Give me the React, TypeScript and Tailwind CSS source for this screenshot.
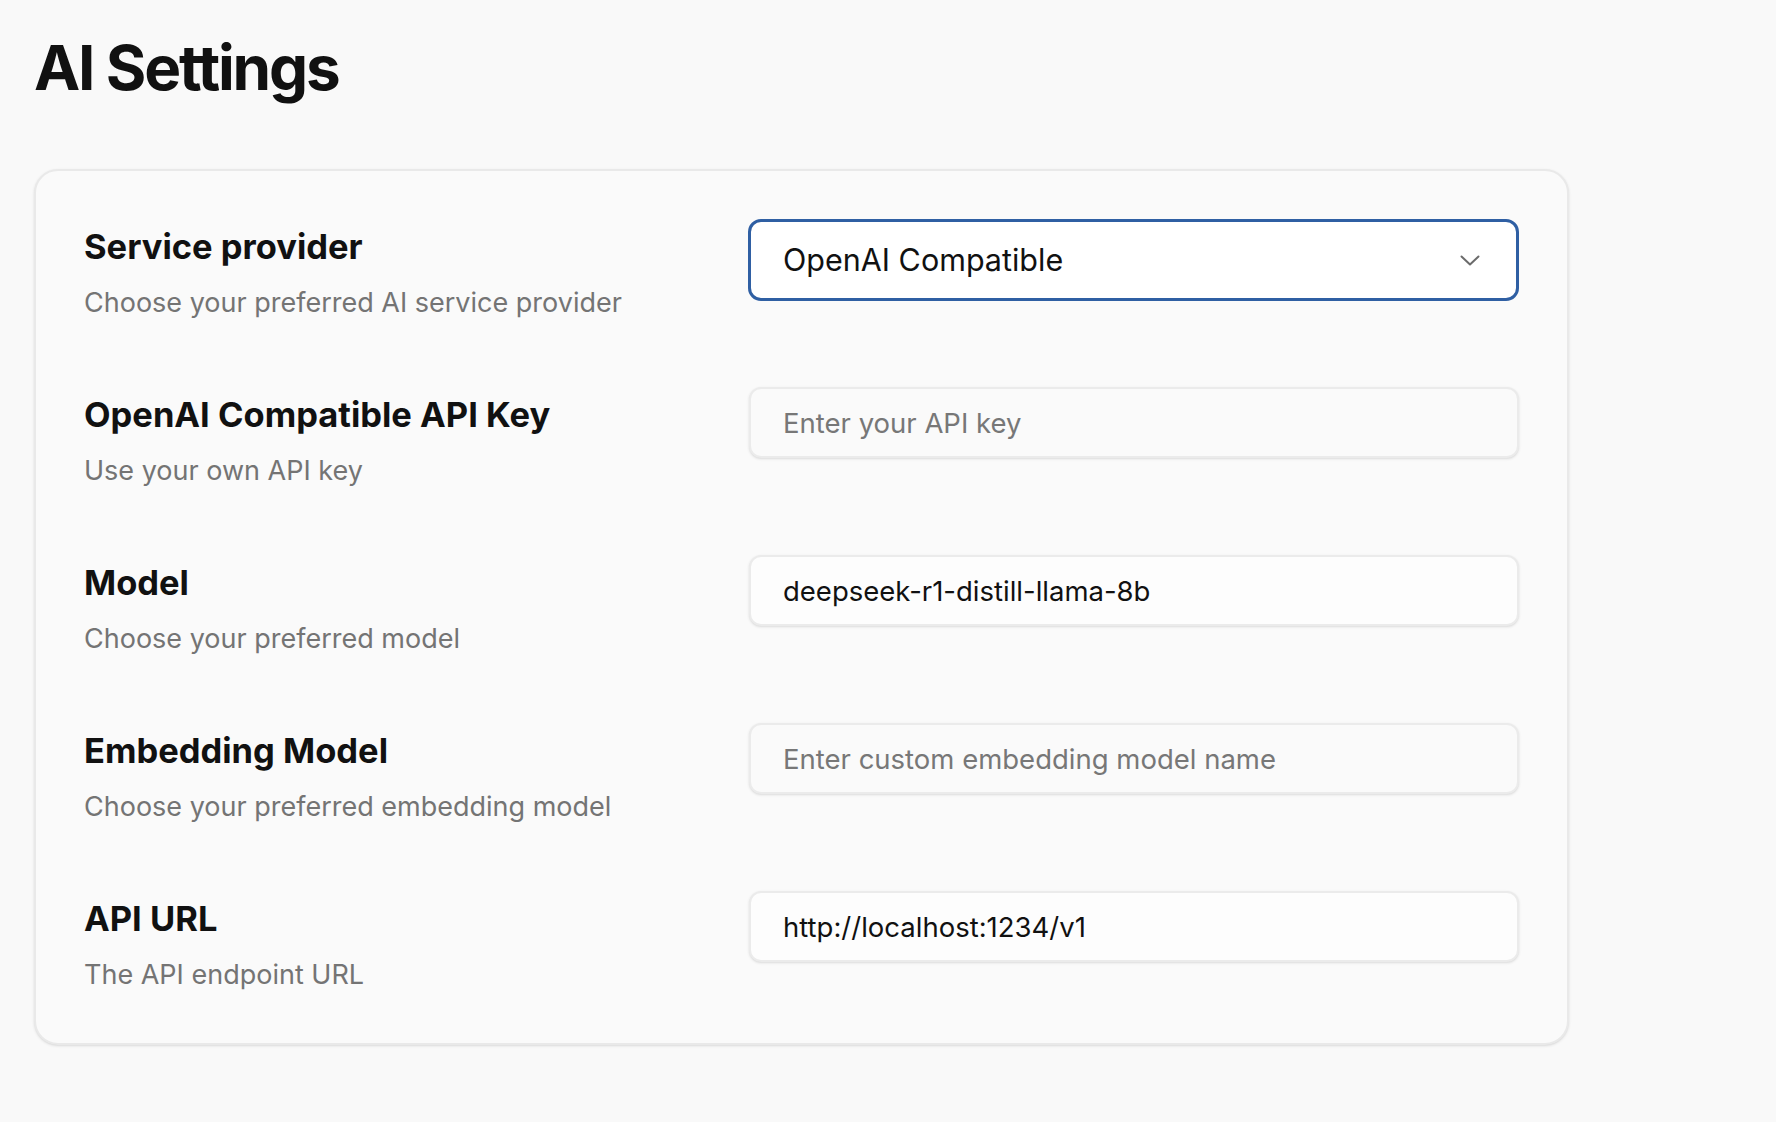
import { useState } from "react";

interface Field {
  label: string;
  description: string;
  placeholder?: string;
  value?: string;
}

const fields: Field[] = [
  {
    label: "OpenAI Compatible API Key",
    description: "Use your own API key",
    placeholder: "Enter your API key",
  },
  {
    label: "Model",
    description: "Choose your preferred model",
    value: "deepseek-r1-distill-llama-8b",
  },
  {
    label: "Embedding Model",
    description: "Choose your preferred embedding model",
    placeholder: "Enter custom embedding model name",
  },
  {
    label: "API URL",
    description: "The API endpoint URL",
    value: "http://localhost:1234/v1",
  },
];

function Label({ title, description }: { title: string; description: string }) {
  return (
    <div className="flex flex-col h-[104px]">
      <h3 className="text-[34.5px] leading-[55px] font-bold text-[#111111]">{title}</h3>
      <p className="mt-[9px] text-[27px] leading-[40px] text-[#747474]">{description}</p>
    </div>
  );
}

export default function App() {
  const [provider] = useState("OpenAI Compatible");
  const [values, setValues] = useState<Record<string, string>>(
    Object.fromEntries(fields.map((f) => [f.label, f.value ?? ""]))
  );

  return (
    <div className="min-h-screen bg-[#f9f9f9] font-['Inter','Noto_Sans',sans-serif] px-[34px] pt-[36px] pb-10">
      <h1 className="text-[62px] leading-[63px] font-bold tracking-[-0.035em] text-[#111111]">AI Settings</h1>

      <div className="mt-[70px] w-[1535px] bg-[#fafafa] border-2 border-[#e9e9e9] rounded-[24px] shadow-sm p-[48px] flex flex-col gap-[64px]">
        {/* Service provider */}
        <div className="flex items-start justify-between">
          <Label title="Service provider" description="Choose your preferred AI service provider" />
          <button className="w-[771px] h-[82px] bg-white border-[3px] border-[#2f5fa3] rounded-[13px] pl-[32px] pr-[36px] flex items-center justify-between">
            <span className="text-[30.5px] text-[#111111]">{provider}</span>
            <svg width="20" height="11" viewBox="0 0 20 11" fill="none" stroke="#6b6b6b" strokeWidth="2" strokeLinecap="round" strokeLinejoin="round">
              <path d="M1.5 1.5 10 9.5 18.5 1.5" />
            </svg>
          </button>
        </div>

        {fields.map((f) => (
          <div key={f.label} className="flex items-start justify-between">
            <Label title={f.label} description={f.description} />
            <input
              value={values[f.label]}
              placeholder={f.placeholder}
              onChange={(e) => setValues((prev) => ({ ...prev, [f.label]: e.target.value }))}
              className={`w-[770px] h-[71px] rounded-[12px] border-2 border-[#ebebeb] shadow-sm px-[32px] text-[27.5px] text-[#111111] placeholder:text-[#777777] outline-none ${
                f.value ? "bg-[#fdfdfd]" : "bg-[#fafafa]"
              }`}
            />
          </div>
        ))}
      </div>
    </div>
  );
}
